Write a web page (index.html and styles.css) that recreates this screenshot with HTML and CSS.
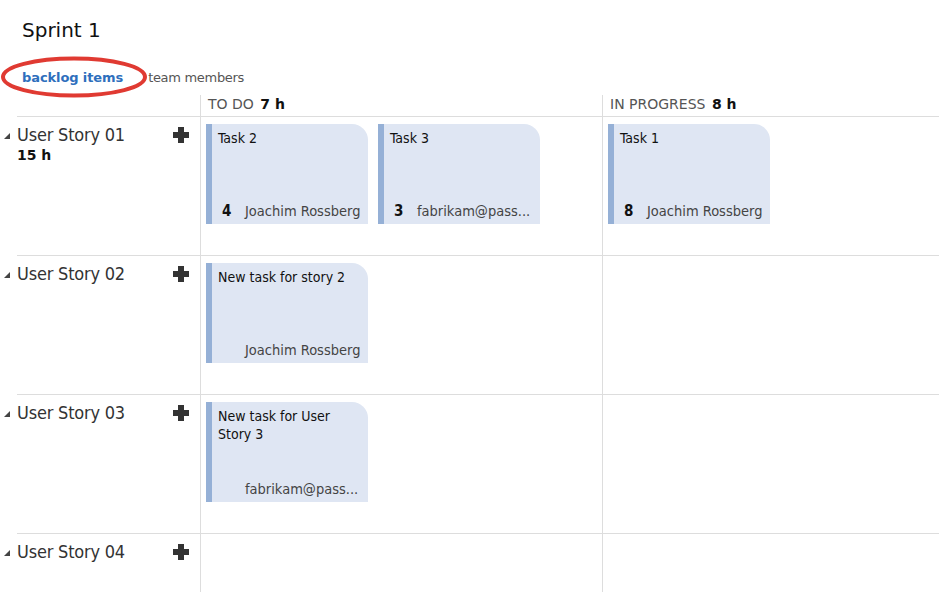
FILE: index.html
```html
<!DOCTYPE html>
<html>
<head>
<meta charset="utf-8">
<link rel="stylesheet" href="styles.css">
</head>
<body>
<div class="page">
  <h1 class="title">Sprint 1</h1>
  <div class="tabs">
    <span class="tab active">backlog items</span>
    <span class="tab">team members</span>
    <svg class="ring" width="150" height="44" viewBox="0 0 150 44"><ellipse cx="74" cy="21" rx="71" ry="18.5" fill="none" stroke="#e03a32" stroke-width="4"/></svg>
  </div>
  <div class="board">
    <div class="hcell hstory"></div>
    <div class="hcell hcol">TO DO <b>7 h</b></div>
    <div class="hcell hcol">IN PROGRESS <b>8 h</b></div>

    <div class="story">
      <div class="story-head">
        <span class="tri"></span>
        <div class="story-text"><div class="story-name">User Story 01</div><div class="story-hours">15 h</div></div>
        <span class="plus"></span>
      </div>
    </div>
    <div class="cell">
      <div class="card"><div class="card-title">Task 2</div><div class="card-foot"><span class="num">4</span><span class="who">Joachim Rossberg</span></div></div>
      <div class="card"><div class="card-title">Task 3</div><div class="card-foot"><span class="num">3</span><span class="who">fabrikam@pass...</span></div></div>
    </div>
    <div class="cell">
      <div class="card"><div class="card-title">Task 1</div><div class="card-foot"><span class="num">8</span><span class="who">Joachim Rossberg</span></div></div>
    </div>

    <div class="story">
      <div class="story-head">
        <span class="tri"></span>
        <div class="story-text"><div class="story-name">User Story 02</div></div>
        <span class="plus"></span>
      </div>
    </div>
    <div class="cell">
      <div class="card"><div class="card-title">New task for story 2</div><div class="card-foot"><span class="num"></span><span class="who">Joachim Rossberg</span></div></div>
    </div>
    <div class="cell"></div>

    <div class="story">
      <div class="story-head">
        <span class="tri"></span>
        <div class="story-text"><div class="story-name">User Story 03</div></div>
        <span class="plus"></span>
      </div>
    </div>
    <div class="cell">
      <div class="card"><div class="card-title">New task for User Story 3</div><div class="card-foot"><span class="num"></span><span class="who">fabrikam@pass...</span></div></div>
    </div>
    <div class="cell"></div>

    <div class="story last">
      <div class="story-head">
        <span class="tri"></span>
        <div class="story-text"><div class="story-name">User Story 04</div></div>
        <span class="plus"></span>
      </div>
    </div>
    <div class="cell last"></div>
    <div class="cell last"></div>
  </div>
</div>
</body>
</html>
```
FILE: styles.css
```css
* { box-sizing: border-box; }
html, body { margin: 0; padding: 0; background: #fff; }
body { font-family: "DejaVu Sans", Verdana, sans-serif; color: #222; overflow: hidden; }
.page { width: 939px; height: 593px; overflow: hidden; }
.title {
  margin: 0;
  padding: 17px 0 0 22px;
  height: 60px;
  font-weight: normal;
  font-size: 20px;
  line-height: 26px;
  color: #111;
}
.tabs {
  position: relative;
  height: 35px;
  padding-left: 22px;
  display: flex;
  align-items: center;
  gap: 25px;
  font-size: 13px;
}
.tab { color: #555; letter-spacing: -0.3px; }
.tab.active { color: #2e6fbd; font-weight: bold; letter-spacing: -0.1px; }
.ring { position: absolute; left: 0; top: -4px; }
.board {
  display: grid;
  grid-template-columns: 183px 402px 337px;
  grid-template-rows: 22px 139px 139px 139px 58px;
  margin-left: 17px;
}
.hcell { border-bottom: 1px solid #ddd; }
.hcol {
  border-left: 1px solid #ddd;
  padding-left: 7px;
  font-size: 14px;
  color: #555;
  line-height: 18px;
}
.hcol b { color: #111; margin-left: 2px; }
.story { border-bottom: 1px solid #ddd; position: relative; }
.story-head { display: flex; padding-top: 6px; }
.tri {
  position: absolute;
  left: -13px;
  top: 16px;
  width: 0; height: 0;
  border-left: 6px solid transparent;
  border-bottom: 6px solid #444;
}
.story-text { flex: 1; }
.story-name { font-size: 18px; line-height: 24px; color: #333; letter-spacing: -0.2px; font-family: "DejaVu Sans Condensed", "DejaVu Sans", sans-serif; }
.story-hours { font-size: 14px; font-weight: bold; line-height: 17px; color: #111; }
.plus {
  position: relative;
  width: 16px; height: 16px;
  margin: 4px 11px 0 0;
}
.plus::before, .plus::after {
  content: "";
  position: absolute;
  background: #333;
}
.plus::before { left: 0; top: 5px; width: 16px; height: 6px; }
.plus::after { left: 5px; top: 0; width: 6px; height: 16px; }
.cell {
  border-left: 1px solid #ddd;
  border-bottom: 1px solid #ddd;
  padding: 7px 0 0 5px;
  display: flex;
  align-items: flex-start;
  gap: 10px;
}
.last { border-bottom: none; }
.card {
  width: 162px;
  height: 100px;
  background: #dfe6f3;
  border-left: 6px solid #95b0d6;
  border-top-right-radius: 16px;
  display: flex;
  flex-direction: column;
  justify-content: space-between;
  padding: 5px 2px 3px 6px;
  font-family: "DejaVu Sans Condensed", "DejaVu Sans", sans-serif;
}
.card-title { font-size: 14px; line-height: 18px; color: #111; padding-right: 6px; }
.card-foot { display: flex; align-items: baseline; padding-left: 4px; }
.num { width: 23px; flex: none; font-weight: bold; font-size: 15px; color: #111; }
.who { font-size: 14.5px; color: #444; white-space: nowrap; line-height: 20px; }
```
